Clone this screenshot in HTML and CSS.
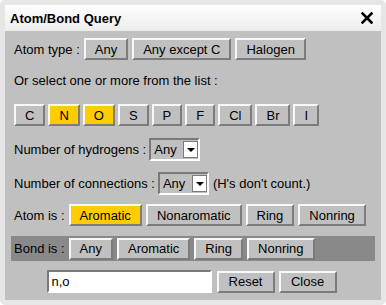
FILE: index.html
```html
<!DOCTYPE html>
<html lang="en">
<head>
    <meta charset="UTF-8">
    <title>Atom/Bond Query</title>
    <link rel="stylesheet" href="styles.css">
</head>
<body>
    <div class="dialog">
        <div class="titleBar">
            <span class="title">Atom/Bond Query</span>
            <svg class="close" width="12" height="12" viewBox="0 0 12 12">
                <path d="M1.5 1.5 L10.5 10.5 M10.5 1.5 L1.5 10.5" stroke="#000" stroke-width="2.6" stroke-linecap="square"/>
            </svg>
        </div>
        <div class="content">
            <div class="row rowType">
                <span class="label">Atom type :</span>
                <span class="btn">Any</span>
                <span class="btn">Any except C</span>
                <span class="btn">Halogen</span>
            </div>
            <div class="row rowText">Or select one or more from the list :</div>
            <div class="row rowElems">
                <span class="btn">C</span>
                <span class="btn on">N</span>
                <span class="btn on">O</span>
                <span class="btn">S</span>
                <span class="btn">P</span>
                <span class="btn">F</span>
                <span class="btn">Cl</span>
                <span class="btn">Br</span>
                <span class="btn">I</span>
            </div>
            <div class="row rowHyd">
                <span class="label">Number of hydrogens :</span>
                <span class="select"><span class="selVal">Any</span><span class="arrow"></span></span>
            </div>
            <div class="row rowConn">
                <span class="label">Number of connections :</span>
                <span class="select"><span class="selVal">Any</span><span class="arrow"></span></span>
                <span class="note">(H's don't count.)</span>
            </div>
            <div class="row rowAtom">
                <span class="label">Atom is :</span>
                <span class="btn on">Aromatic</span>
                <span class="btn">Nonaromatic</span>
                <span class="btn">Ring</span>
                <span class="btn">Nonring</span>
            </div>
            <div class="row rowBond">
                <span class="label">Bond is :</span>
                <span class="btn">Any</span>
                <span class="btn">Aromatic</span>
                <span class="btn">Ring</span>
                <span class="btn">Nonring</span>
            </div>
            <div class="row rowInput">
                <input type="text" class="query" value="n,o">
                <span class="btn wide">Reset</span>
                <span class="btn wide">Close</span>
            </div>
        </div>
    </div>
</body>
</html>
```

FILE: styles.css
```css
*{
    box-sizing: border-box;
    font-family: "Liberation Sans", Arial, Helvetica, sans-serif;
}

body{
    margin:0;
    background:#fff;
}

.dialog{
    width:386px;
    height:305px;
    border:5px solid #e6e6e6;
    border-radius:5px;
    background:#c0c0c0;
    display:flex;
    flex-direction:column;
}

.titleBar{
    height:26px;
    background:linear-gradient(#ffffff, #ececec);
    display:flex;
    align-items:center;
    justify-content:space-between;
    padding:0 8px 0 5px;
}

.title{
    font-weight:bold;
    font-size:13px;
    color:#000;
}

.close{
    display:block;
    margin-top:-1px;
}

.content{
    padding:7px 6px 0 9px;
    display:flex;
    flex-direction:column;
    font-size:13px;
    color:#000;
}

.row{
    display:flex;
    align-items:center;
    gap:4px;
    height:22px;
}

.rowText{ margin-top:9px; }
.rowElems{ margin-top:13px; gap:3px; }
.rowHyd{ margin-top:12px; height:23px; }
.rowConn{ margin-top:11px; height:23px; }
.rowAtom{ margin-top:9px; }

.rowBond{
    margin-top:10px;
    margin-left:-3px;
    padding-left:3px;
    height:25px;
    background:#898989;
}

.rowInput{
    margin-top:9px;
    height:23px;
    justify-content:center;
    padding-right:6px;
}

.rowHyd .label,
.rowConn .label{
    margin-right:-1px;
}

.btn{
    height:22px;
    padding:0 9px;
    display:flex;
    align-items:center;
    justify-content:center;
    background:#c0c0c0;
    border:2px solid;
    border-color:#f8f8f8 #7c7c7c #7c7c7c #f8f8f8;
}

.btn.on{
    background:#ffcc00;
}

.btn.wide{
    min-width:58px;
}

.select{
    display:flex;
    align-items:center;
    height:23px;
    width:51px;
    border:2px solid;
    border-color:#7a7a7a #ffffff #ffffff #7a7a7a;
    padding-left:3px;
}

.selVal{
    flex:1;
}

.arrow{
    width:15px;
    height:17px;
    background:#fff;
    border:1px solid #7a7a7a;
    position:relative;
}

.arrow::after{
    content:"";
    position:absolute;
    left:3px;
    top:6px;
    border-left:4px solid transparent;
    border-right:4px solid transparent;
    border-top:4px solid #000;
}

.query{
    width:165px;
    height:23px;
    font-size:13px;
    padding:0 3px;
    border:2px solid;
    border-color:#7a7a7a #ffffff #ffffff #7a7a7a;
    background:#fff;
    color:#000;
    margin-right:1px;
}
```
